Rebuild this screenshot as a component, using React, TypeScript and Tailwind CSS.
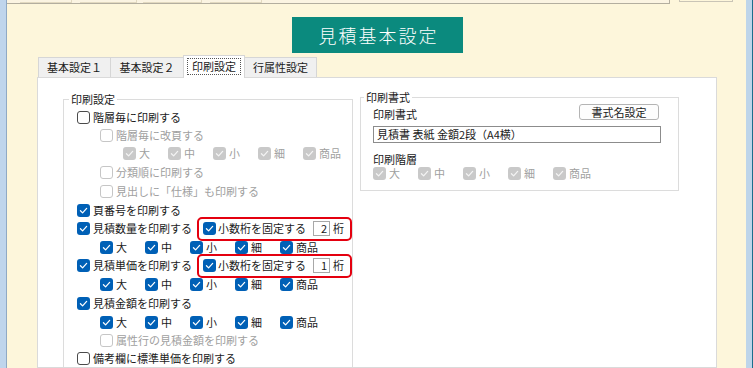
import React from 'react';

type CB = 'on' | 'off' | 'don' | 'doff';

function Check({ color = '#ffffff' }: { color?: string }) {
  return (
    <svg width="9" height="9" viewBox="0 0 10 10" fill="none">
      <path d="M1.6 5.3 L4 7.6 L8.5 2.7" stroke={color} strokeWidth="1.4" strokeLinecap="round" strokeLinejoin="round" />
    </svg>
  );
}

function Box({ s }: { s: CB }) {
  if (s === 'on')
    return (
      <span className="flex h-[13px] w-[13px] shrink-0 items-center justify-center rounded-[3px] bg-[#0060b6]">
        <Check />
      </span>
    );
  if (s === 'don')
    return (
      <span className="flex h-[13px] w-[13px] shrink-0 items-center justify-center rounded-[3px] bg-[#c9c9c9]">
        <Check color="#f4f4f4" />
      </span>
    );
  if (s === 'doff') return <span className="h-[13px] w-[13px] shrink-0 rounded-[3px] border border-[#c6c6c6] bg-white" />;
  return <span className="h-[13px] w-[13px] shrink-0 rounded-[3px] border border-[#4a4a4a] bg-white" />;
}

function Levels({ s, dim }: { s: CB; dim?: boolean }) {
  return (
    <div className="flex">
      {['大', '中', '小', '細', '商品'].map((t) => (
        <div key={t} className="flex w-[45px] items-center gap-[3px]">
          <Box s={s} />
          <span className={dim ? 'text-[#a0a0a0]' : 'text-[#1a1a1a]'}>{t}</span>
        </div>
      ))}
    </div>
  );
}

function Row({ h, pl, s, label, dim }: { h: string; pl: string; s: CB; label: string; dim?: boolean }) {
  return (
    <div className={`flex items-center ${h} ${pl}`}>
      <Box s={s} />
      <span className={`ml-[3px] ${dim ? 'text-[#a0a0a0]' : 'text-[#1a1a1a]'}`}>{label}</span>
    </div>
  );
}

function RedRow({ label, digits }: { label: string; digits: string }) {
  return (
    <div className="flex h-[19px] items-center pl-[13px]">
      <Box s="on" />
      <span className="ml-[3px] w-[104px] shrink-0 text-[#1a1a1a]">{label}</span>
      <div className="flex h-[24px] w-[155px] shrink-0 items-center rounded-[5px] border-2 border-[#e4000f] bg-white pl-[4px]">
        <Box s="on" />
        <span className="ml-[2px] w-[95px] shrink-0 text-[#1a1a1a]">小数桁を固定する</span>
        <span className="flex h-[15px] w-[17px] shrink-0 items-center justify-end border border-[#a8a8a8] pr-[2px] leading-[13px] text-[#1a1a1a]">
          {digits}
        </span>
        <span className="ml-[3px] text-[#1a1a1a]">桁</span>
      </div>
    </div>
  );
}

export default function App() {
  return (
    <div className="flex h-[368px] w-[753px] overflow-hidden bg-[#fdf6db] font-['Noto_Sans_CJK_JP',sans-serif] text-[11px] leading-[13px]">
      <div className="h-full w-[7px] shrink-0 border-r border-[#8fa9c4] bg-[#bfd5ec]" />
      <div className="flex w-[739px] shrink-0 flex-col">
        <div className="flex h-[4px] shrink-0">
          <div className="flex h-[4px] w-[663px] border-b border-r border-[#b3ae9f] bg-[#fbf4e2]">
            <div className="ml-[13px] h-[3px] w-[52px] border-b border-r border-[#e2d9c0]" />
            <div className="ml-[8px] h-[3px] w-[57px] border-b border-r border-[#e2d9c0]" />
            <div className="ml-[6px] h-[3px] w-[59px] border-b border-r border-[#e2d9c0]" />
            <div className="ml-[8px] h-[3px] w-[52px] border-b border-r border-[#e2d9c0]" />
          </div>
          <div className="ml-[9px] h-[2px] w-[54px] border-b border-x border-[#c9c4b6]" />
        </div>
        <div className="ml-[285px] mt-[13px] flex h-[36px] w-[171px] shrink-0 items-center justify-center bg-[#0b8a7e] pl-[2px] text-[18px] font-light tracking-[2px] text-white">
          見積基本設定
        </div>
        <div className="ml-[31px] mt-[2px] flex h-[22px] shrink-0 items-end">
          <div className="flex h-[20px] w-[72px] items-center justify-center border-l border-t border-[#d6d6d6] bg-[#f0f0f0] text-[#1a1a1a]">
            基本設定１
          </div>
          <div className="flex h-[20px] w-[73px] items-center justify-center border-l border-t border-[#d6d6d6] bg-[#f0f0f0] text-[#1a1a1a]">
            基本設定２
          </div>
          <div className="relative z-10 -mb-px flex h-[23px] w-[62px] items-center justify-center border-x border-t border-[#d6d6d6] bg-white pb-[1px]">
            <span className="flex h-[17px] w-[54px] items-center justify-center border border-dotted border-[#555555] text-[#1a1a1a]">
              印刷設定
            </span>
          </div>
          <div className="flex h-[20px] w-[72px] items-center justify-center border-r border-t border-[#d6d6d6] bg-[#f0f0f0] text-[#1a1a1a]">
            行属性設定
          </div>
        </div>
        <div className="ml-[30px] flex w-[680px] flex-1 items-start overflow-hidden border border-[#dadada] bg-white pl-[25px] pt-[19px]">
          <div className="relative mt-[2px] h-[300px] w-[290px] shrink-0 border border-[#dcdcdc] pt-[8px]">
            <span className="absolute left-[5px] top-[-7px] bg-white px-[2px] leading-[12px] text-[#1a1a1a]">印刷設定</span>
            <Row h="h-[19px]" pl="pl-[13px]" s="off" label="階層毎に印刷する" />
            <Row h="h-[17px]" pl="pl-[36px]" s="doff" label="階層毎に改頁する" dim />
            <div className="flex h-[19px] items-center pl-[59px]">
              <Levels s="don" dim />
            </div>
            <Row h="h-[18px]" pl="pl-[36px]" s="doff" label="分類順に印刷する" dim />
            <Row h="h-[20px]" pl="pl-[36px]" s="doff" label="見出しに「仕様」も印刷する" dim />
            <Row h="h-[18px]" pl="pl-[13px]" s="on" label="頁番号を印刷する" />
            <RedRow label="見積数量を印刷する" digits="2" />
            <div className="flex h-[18px] items-center pl-[36px]">
              <Levels s="on" />
            </div>
            <RedRow label="見積単価を印刷する" digits="1" />
            <div className="flex h-[19px] items-center pl-[36px]">
              <Levels s="on" />
            </div>
            <Row h="h-[19px]" pl="pl-[13px]" s="on" label="見積金額を印刷する" />
            <div className="flex h-[18px] items-center pl-[36px]">
              <Levels s="on" />
            </div>
            <Row h="h-[18px]" pl="pl-[36px]" s="doff" label="属性行の見積金額を印刷する" dim />
            <Row h="h-[18px]" pl="pl-[13px]" s="off" label="備考欄に標準単価を印刷する" />
          </div>
          <div className="relative ml-[7px] h-[94px] w-[319px] shrink-0 border border-[#dcdcdc] pl-[12px] pr-[17px] pt-[6px]">
            <span className="absolute left-[3px] top-[-7px] bg-white px-[2px] leading-[12px] text-[#1a1a1a]">印刷書式</span>
            <div className="flex h-[16px] items-end justify-between">
              <span className="leading-[12px] text-[#1a1a1a]">印刷書式</span>
              <div className="mr-[2px] flex h-[16px] w-[80px] items-center justify-center rounded-[3px] border border-[#b4b4b4] bg-[#fdfdfd] text-[#1a1a1a]">
                書式名設定
              </div>
            </div>
            <div className="mt-[6px] flex h-[17px] items-center border border-[#8c8c8c] pl-[3px] text-[#1a1a1a]">
              見積書 表紙 金額2段（A4横）
            </div>
            <div className="mt-[9px] h-[14px] leading-[14px] text-[#1a1a1a]">印刷階層</div>
            <div className="mt-[1px] flex h-[13px] items-center">
              <Levels s="don" dim />
            </div>
          </div>
        </div>
      </div>
      <div className="h-full w-[6px] shrink-0 bg-[#bed5ea]" />
      <div className="h-full w-[1px] shrink-0 bg-[#1b6e8c]" />
    </div>
  );
}
